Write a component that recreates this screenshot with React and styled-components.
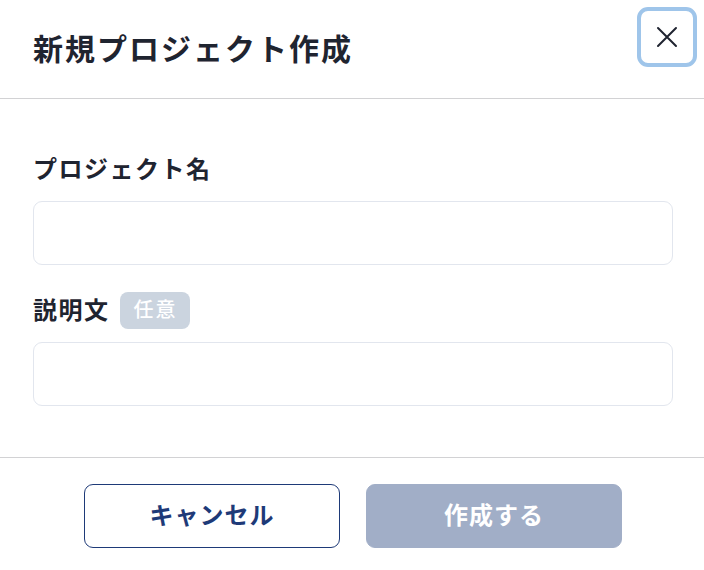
import React from "react";
import styled, { createGlobalStyle } from "styled-components";

const Global = createGlobalStyle`
  html, body { margin: 0; padding: 0; background: #ffffff; }
  body { font-family: "Noto Sans CJK JP", "Noto Sans", sans-serif; }
  * { box-sizing: border-box; }
`;

const Dialog = styled.div`
  width: 704px;
  height: 570px;
  display: flex;
  flex-direction: column;
  background: #fff;
  color: #1f2430;
`;

const Header = styled.header`
  height: 99px;
  flex: none;
  display: flex;
  align-items: center;
  justify-content: space-between;
  padding: 0 7px 4px 33px;
  border-bottom: 1px solid #d2d2d4;
`;

const Title = styled.h1`
  margin: 0;
  font-size: 30px;
  font-weight: 700;
  letter-spacing: 2px;
  line-height: 40px;
  color: #1f2430;
`;

const CloseButton = styled.button`
  align-self: flex-start;
  margin-top: 7px;
  width: 60px;
  height: 60px;
  border: 4px solid #9fc5ea;
  border-radius: 11px;
  background: #fff;
  display: flex;
  align-items: center;
  justify-content: center;
  padding: 0;
  color: #1f2430;
`;

const Body = styled.main`
  flex: 1;
  display: flex;
  flex-direction: column;
  gap: 26px;
  padding: 51px 31px 0 33px;
`;

const Field = styled.div`
  display: flex;
  flex-direction: column;
  gap: 13px;
`;

const LabelRow = styled.div`
  height: 38px;
  display: flex;
  align-items: center;
  gap: 10px;
`;

const Label = styled.label`
  font-size: 24px;
  font-weight: 700;
  letter-spacing: 1.5px;
  line-height: 34px;
  margin-top: -3px;
  color: #1f2430;
`;

const Badge = styled.span`
  height: 37px;
  display: inline-flex;
  align-items: center;
  padding: 0 12px 3px 14px;
  border-radius: 8px;
  background: #cbd4df;
  color: #ffffff;
  font-size: 20px;
  font-weight: 500;
  letter-spacing: 2px;
`;

const Input = styled.input`
  height: 64px;
  width: 100%;
  border: 1px solid #e2e6ee;
  border-radius: 9px;
  background: #fff;
  padding: 0 16px;
  font-size: 20px;
  font-family: inherit;
  outline: none;
`;

const Footer = styled.footer`
  flex: none;
  height: 113px;
  border-top: 1px solid #d2d2d4;
  display: flex;
  justify-content: center;
  align-items: flex-start;
  gap: 26px;
  padding: 26px 0 0 2px;
`;

const Button = styled.button`
  width: 256px;
  height: 64px;
  border-radius: 9px;
  font-family: "Noto Sans CJK JP", "Noto Sans", sans-serif;
  font-size: 24px;
  font-weight: 700;
  letter-spacing: 1px;
  display: flex;
  align-items: center;
  justify-content: center;
  padding: 0 0 5px;
  border: 1px solid ${(p) => (p.$primary ? "#a1aec7" : "#1e3a78")};
  background: ${(p) => (p.$primary ? "#a1aec7" : "#ffffff")};
  color: ${(p) => (p.$primary ? "#ffffff" : "#1e3a78")};
`;

export default function App() {
  return (
    <Dialog>
      <Global />
      <Header>
        <Title>新規プロジェクト作成</Title>
        <CloseButton aria-label="閉じる">
          <svg width="22" height="22" viewBox="0 0 22 22" fill="none">
            <path d="M2 2L20 20M20 2L2 20" stroke="#1f2430" strokeWidth="2" strokeLinecap="round" />
          </svg>
        </CloseButton>
      </Header>
      <Body>
        <Field>
          <LabelRow>
            <Label>プロジェクト名</Label>
          </LabelRow>
          <Input />
        </Field>
        <Field>
          <LabelRow>
            <Label>説明文</Label>
            <Badge>任意</Badge>
          </LabelRow>
          <Input />
        </Field>
      </Body>
      <Footer>
        <Button>キャンセル</Button>
        <Button $primary>作成する</Button>
      </Footer>
    </Dialog>
  );
}
